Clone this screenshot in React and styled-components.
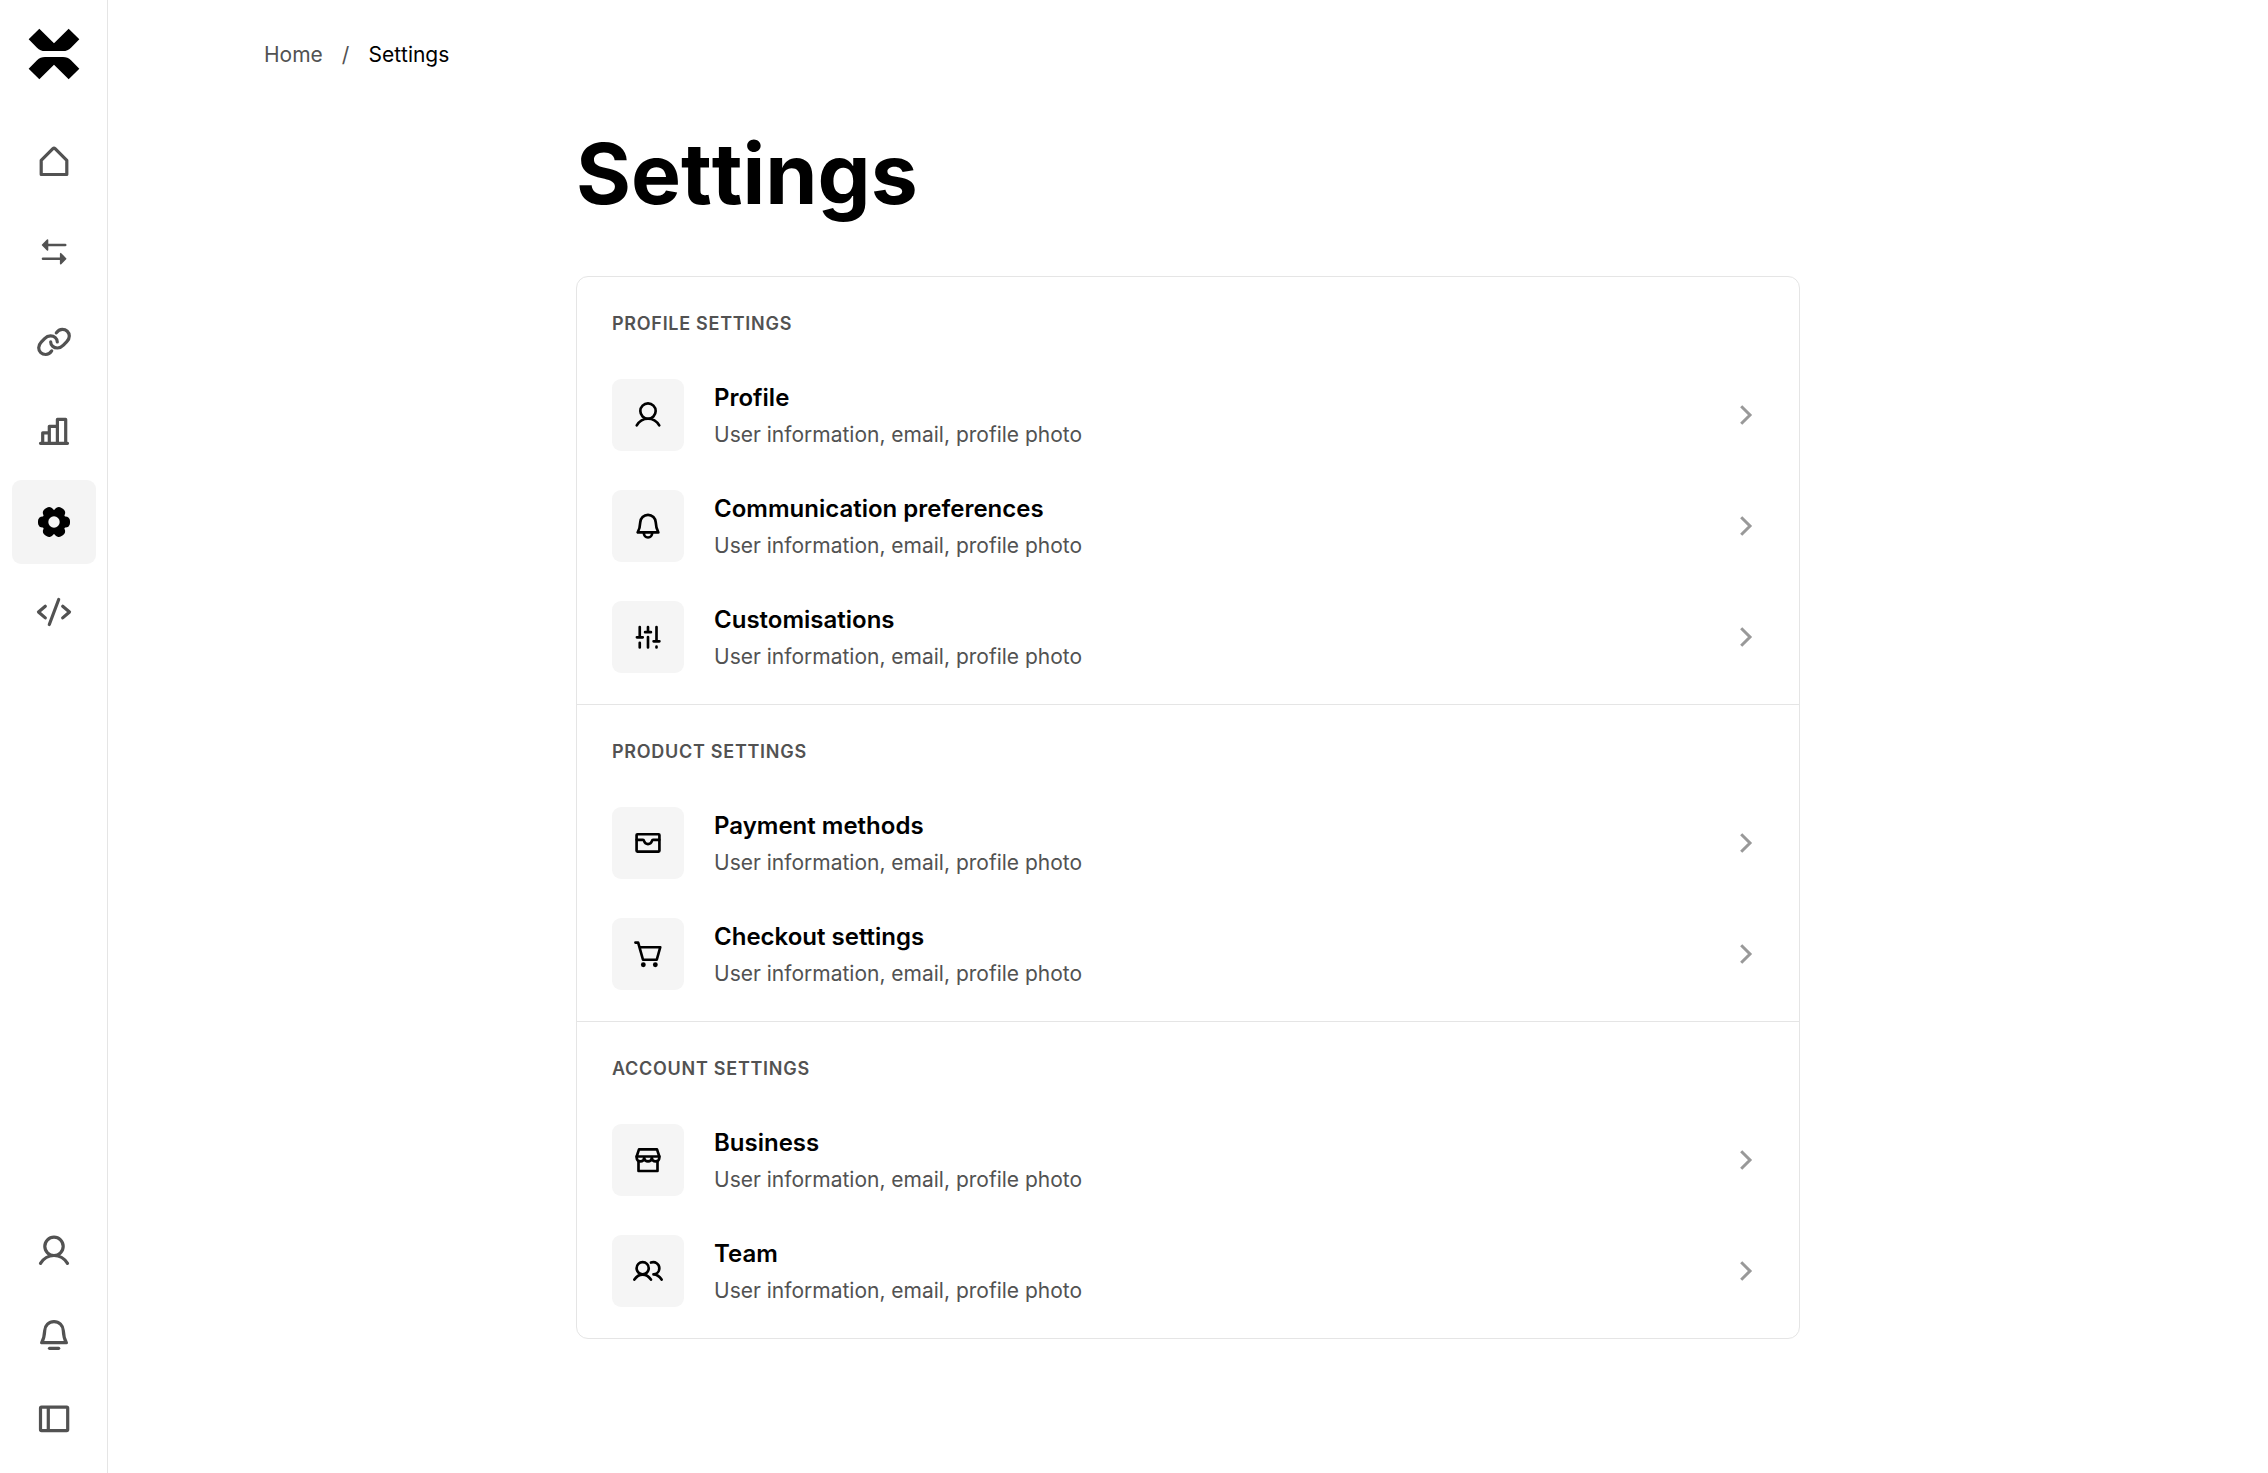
import React from "react";
import styled, { createGlobalStyle } from "styled-components";

const GlobalStyle = createGlobalStyle`
  * {
    box-sizing: border-box;
  }

  body {
    margin: 0;
    background-color: #ffffff;
    color: #000000;
    font-family: Inter, "Liberation Sans", sans-serif;
    -webkit-font-smoothing: antialiased;
  }
`;

const Layout = styled.div`
  display: flex;
  min-height: 100vh;
`;

const Sidebar = styled.aside`
  position: sticky;
  top: 0;
  display: flex;
  flex-direction: column;
  align-items: center;
  justify-content: space-between;
  flex-shrink: 0;
  width: 108px;
  height: 100vh;
  padding: 28px 12px 12px;
  border-right: 1px solid #e5e5e5;
`;

const LogoLink = styled.a`
  display: block;
  width: 52px;
  height: 52px;
  margin: 0 auto 40px;
  color: #000000;

  svg {
    display: block;
  }
`;

const NavList = styled.ul`
  display: flex;
  flex-direction: column;
  gap: ${(props) => props.$gap || 0}px;
  margin: 0;
  padding: 0;
  list-style: none;
`;

const NavItem = styled.a`
  display: flex;
  align-items: center;
  justify-content: center;
  width: 84px;
  height: 84px;
  padding: 0;
  border: 0;
  border-radius: 9px;
  background-color: ${(props) => (props.$active ? "#f4f4f4" : "transparent")};
  color: ${(props) => (props.$active ? "#000000" : "#525252")};
  cursor: pointer;
`;

const Main = styled.main`
  flex: 1;
  min-width: 0;
`;

const Breadcrumbs = styled.nav`
  height: 108px;
  padding: 1px 156px 0;

  ol {
    display: flex;
    align-items: center;
    height: 100%;
    margin: 0;
    padding: 0;
    list-style: none;
    font-size: 21px;
    line-height: 32px;
    font-kerning: none;
  }

  li + li::before {
    content: "/";
    padding: 0 19px;
    color: #525252;
  }

  a {
    color: #525252;
    text-decoration: none;
  }
`;

const Content = styled.div`
  max-width: 1224px;
  margin: 0 auto;
  padding: 18px 0 60px;

  h1 {
    margin: 0 0 54px;
    font-size: 84px;
    line-height: 96px;
    font-weight: 700;
    font-kerning: none;
  }
`;

const Card = styled.div`
  border: 1px solid #e5e5e5;
  border-radius: 12px;
`;

const Section = styled.section`
  padding: 31px 35px;

  & + & {
    border-top: 1px solid #e5e5e5;
  }

  h2 {
    margin: 0 0 39px;
    color: #525252;
    font-size: 18px;
    line-height: 32px;
    font-weight: 600;
    letter-spacing: 0.04em;
    text-transform: uppercase;
  }
`;

const SettingList = styled.ul`
  display: flex;
  flex-direction: column;
  gap: 39px;
  margin: 0;
  padding: 0;
  list-style: none;
`;

const SettingLink = styled.a`
  display: flex;
  align-items: center;
  gap: 30px;
  height: 72px;
  color: #999999;
  text-decoration: none;
`;

const IconTile = styled.span`
  display: flex;
  align-items: center;
  justify-content: center;
  width: 72px;
  height: 72px;
  border-radius: 9px;
  background-color: #f5f5f5;
  color: #000000;
`;

const SettingText = styled.span`
  display: flex;
  flex: 1;
  flex-direction: column;
  gap: 3px;

  strong {
    color: #000000;
    font-size: 24px;
    line-height: 36px;
    font-weight: 600;
  }

  span {
    color: #525252;
    font-size: 21px;
    line-height: 32px;
  }
`;

function Icon({ size = 36, children }) {
  return (
    <svg
      width={size}
      height={size}
      viewBox="0 0 36 36"
      fill="none"
      stroke="currentColor"
      strokeWidth="3.200"
      strokeLinecap="round"
      strokeLinejoin="round"
      aria-hidden="true"
    >
      {children}
    </svg>
  );
}

function Logo() {
  return (
    <svg width="52" height="52" viewBox="84 84 156 156" fill="currentColor">
      <path d="M118 86l44 43.500 44-43.500 32 32-25 25q-10 10-24 10h-54q-14 0-24-10l-25-25z" />
      <path d="M118 238l44-43.500 44 43.500 32-32-25-25q-10-10-24-10h-54q-14 0-24 10l-25 25z" />
    </svg>
  );
}

const HomeIcon = (props) => (
  <Icon {...props}>
    <path d="M5.200 30.500V16.300L16.900 4.600q1.100-1 2.200 0L30.800 16.300V30.500z" />
  </Icon>
);

const TransferIcon = (props) => (
  <Icon {...props}>
    <path strokeWidth="2.600" d="M10 11h19.200M7 24.700h19" />
    <path
      strokeWidth="1.600"
      fill="currentColor"
      d="M6.600 11l4.900-5v10zM29.600 24.700l-4.900-5v10z"
    />
  </Icon>
);

const linkPath =
  "M20.300 8.900C21.700 6.800 23.700 5.300 26.300 5.300c3.900 0 7 2.900 7 6.700 0 2.300-.9 4-2.500 5.700l-3.400 3.500c-1.700 1.800-3.500 2.800-5.900 2.800-3.900 0-6.800-2.700-6.800-6.100";

const LinkIcon = (props) => (
  <Icon {...props}>
    <path d={linkPath} />
    <path d={linkPath} transform="rotate(180 18 17.900)" />
  </Icon>
);

const ChartIcon = (props) => (
  <Icon {...props}>
    <path d="M4.500 29.300h27M6.700 29V18.800h6.500M13.300 29V12.300h8M21.400 29V5.400h8.300V29" />
  </Icon>
);

const GearIcon = (props) => (
  <Icon {...props}>
    <mask id="gear-hole">
      <rect width="36" height="36" fill="#ffffff" stroke="none" />
      <circle cx="18" cy="18" r="5.700" fill="#000000" stroke="none" />
    </mask>
    <g fill="currentColor" stroke="none" mask="url(#gear-hole)">
      <circle cx="18" cy="18" r="12.200" />
      {[0, 60, 120, 180, 240, 300].map((angle) => (
        <rect
          key={angle}
          x="22"
          y="12.400"
          width="12"
          height="11.200"
          rx="4.600"
          transform={`rotate(${angle} 18 18)`}
        />
      ))}
    </g>
  </Icon>
);

const CodeIcon = (props) => (
  <Icon {...props}>
    <path d="M9.300 12.300L2.500 18l6.800 5.900M26.700 12.300l6.800 5.700-6.800 5.900M22.700 5.500l-9.400 25" />
  </Icon>
);

const UserIcon = (props) => (
  <Icon {...props}>
    <circle cx="18" cy="13.300" r="9.200" />
    <path d="M4.500 30.400C7.500 25.500 12.400 22.500 18 22.500s10.500 3 13.500 7.900" />
  </Icon>
);

const bellBody =
  "M18 4.600c-5.200 0-9 3.900-9.300 9-.2 4.600-.9 8.300-3.100 12.100h24.800c-2.200-3.800-2.900-7.500-3.100-12.100-.3-5.100-4.100-9-9.300-9z";

const BellIcon = (props) => (
  <Icon {...props}>
    <path d={bellBody} />
    <path d="M13.500 31.300h9.200" />
  </Icon>
);

const NotificationIcon = (props) => (
  <Icon {...props}>
    <path d={bellBody} />
    <path d="M13 26c0 3.400 2.100 5.800 5 5.800s5-2.400 5-5.800" />
  </Icon>
);

const PanelIcon = (props) => (
  <Icon {...props}>
    <rect x="4.500" y="6.200" width="27.200" height="23.400" rx="1" />
    <path d="M12.300 6.500v23" />
  </Icon>
);

const SlidersIcon = (props) => (
  <Icon {...props}>
    <path d="M8.100 6v12.400M4.700 18.400h7M8.100 25v5.500M18 6v6M14.500 12.200h7M18 18v12.500M28.200 6v17.200M24.700 23.200h7M28.200 29.600v.9" />
  </Icon>
);

const WalletIcon = (props) => (
  <Icon {...props}>
    <rect x="4.300" y="7.500" width="27.400" height="20.800" rx="1" />
    <path d="M4.500 14.200H12c.8 0 1.100.6 1.300 1.400.6 2.300 2.400 3.700 4.700 3.700s4.100-1.400 4.700-3.700c.2-.8.500-1.400 1.300-1.400h7.500" />
  </Icon>
);

const CartIcon = (props) => (
  <Icon {...props}>
    <path d="M2.900 4.300h3.300L12 24.900h16.500l4.200-15H8" />
    <g fill="currentColor" stroke="none">
      <circle cx="12.400" cy="30.900" r="2.900" />
      <circle cx="26.800" cy="30.900" r="2.900" />
    </g>
  </Icon>
);

const StoreIcon = (props) => (
  <Icon {...props}>
    <path d="M4.400 13.800L7.200 5.300h21.600l2.800 8.500z" />
    <path d="M4.400 14v1.400c0 2.500 2 4.300 4.500 4.300s4.500-1.800 4.500-4.300c0 2.500 2.100 4.300 4.600 4.300s4.600-1.800 4.600-4.300c0 2.500 2 4.300 4.500 4.300s4.500-1.800 4.500-4.300V14" />
    <path d="M6.600 20v11.200h22.800V20" />
  </Icon>
);

const TeamIcon = (props) => (
  <Icon {...props}>
    <circle cx="11.600" cy="14.600" r="7.300" />
    <path d="M1.700 28.300c2.400-3.400 5.900-5.900 9.900-5.900s7.500 2.500 9.900 5.900" />
    <path d="M21.600 7.900c4.900-1.800 10 1.700 10 6.700 0 3.900-3 7.200-7 7.500 4 0 7.400 2.700 9.700 6.200" />
  </Icon>
);

const ChevronIcon = () => (
  <Icon>
    <path
      strokeWidth="3"
      strokeLinecap="butt"
      strokeLinejoin="miter"
      d="M13.200 9.200L22 18l-8.800 8.800"
    />
  </Icon>
);

const mainLinks = [
  { label: "Home", icon: HomeIcon },
  { label: "Transactions", icon: TransferIcon },
  { label: "Links", icon: LinkIcon },
  { label: "Reports", icon: ChartIcon },
  { label: "Settings", icon: GearIcon, active: true },
  { label: "Developers", icon: CodeIcon },
];

const accountActions = [
  { label: "Account", icon: UserIcon },
  { label: "Notifications", icon: BellIcon },
  { label: "Toggle sidebar", icon: PanelIcon },
];

const description = "User information, email, profile photo";

const sections = [
  {
    title: "Profile settings",
    items: [
      { title: "Profile", icon: UserIcon },
      { title: "Communication preferences", icon: NotificationIcon },
      { title: "Customisations", icon: SlidersIcon },
    ],
  },
  {
    title: "Product settings",
    items: [
      { title: "Payment methods", icon: WalletIcon },
      { title: "Checkout settings", icon: CartIcon },
    ],
  },
  {
    title: "Account settings",
    items: [
      { title: "Business", icon: StoreIcon },
      { title: "Team", icon: TeamIcon },
    ],
  },
];

function SideNav() {
  return (
    <Sidebar>
      <nav aria-label="Main">
        <LogoLink href="#" aria-label="Dashboard">
          <Logo />
        </LogoLink>
        <NavList $gap={6}>
          {mainLinks.map(({ label, icon: ItemIcon, active }) => (
            <li key={label}>
              <NavItem
                href="#"
                aria-label={label}
                aria-current={active ? "page" : undefined}
                $active={active}
              >
                <ItemIcon />
              </NavItem>
            </li>
          ))}
        </NavList>
      </nav>
      <NavList>
        {accountActions.map(({ label, icon: ItemIcon }) => (
          <li key={label}>
            <NavItem as="button" type="button" aria-label={label}>
              <ItemIcon />
            </NavItem>
          </li>
        ))}
      </NavList>
    </Sidebar>
  );
}

function SettingRow({ title, icon: ItemIcon }) {
  return (
    <li>
      <SettingLink href="#">
        <IconTile>
          <ItemIcon size={30} />
        </IconTile>
        <SettingText>
          <strong>{title}</strong>
          <span>{description}</span>
        </SettingText>
        <ChevronIcon />
      </SettingLink>
    </li>
  );
}

function App() {
  return (
    <>
      <GlobalStyle />
      <Layout>
        <SideNav />
        <Main>
          <Breadcrumbs aria-label="Breadcrumb">
            <ol>
              <li>
                <a href="#">Home</a>
              </li>
              <li aria-current="page">Settings</li>
            </ol>
          </Breadcrumbs>
          <Content>
            <h1>Settings</h1>
            <Card>
              {sections.map((section) => (
                <Section key={section.title}>
                  <h2>{section.title}</h2>
                  <SettingList>
                    {section.items.map((item) => (
                      <SettingRow key={item.title} {...item} />
                    ))}
                  </SettingList>
                </Section>
              ))}
            </Card>
          </Content>
        </Main>
      </Layout>
    </>
  );
}

export default App;
